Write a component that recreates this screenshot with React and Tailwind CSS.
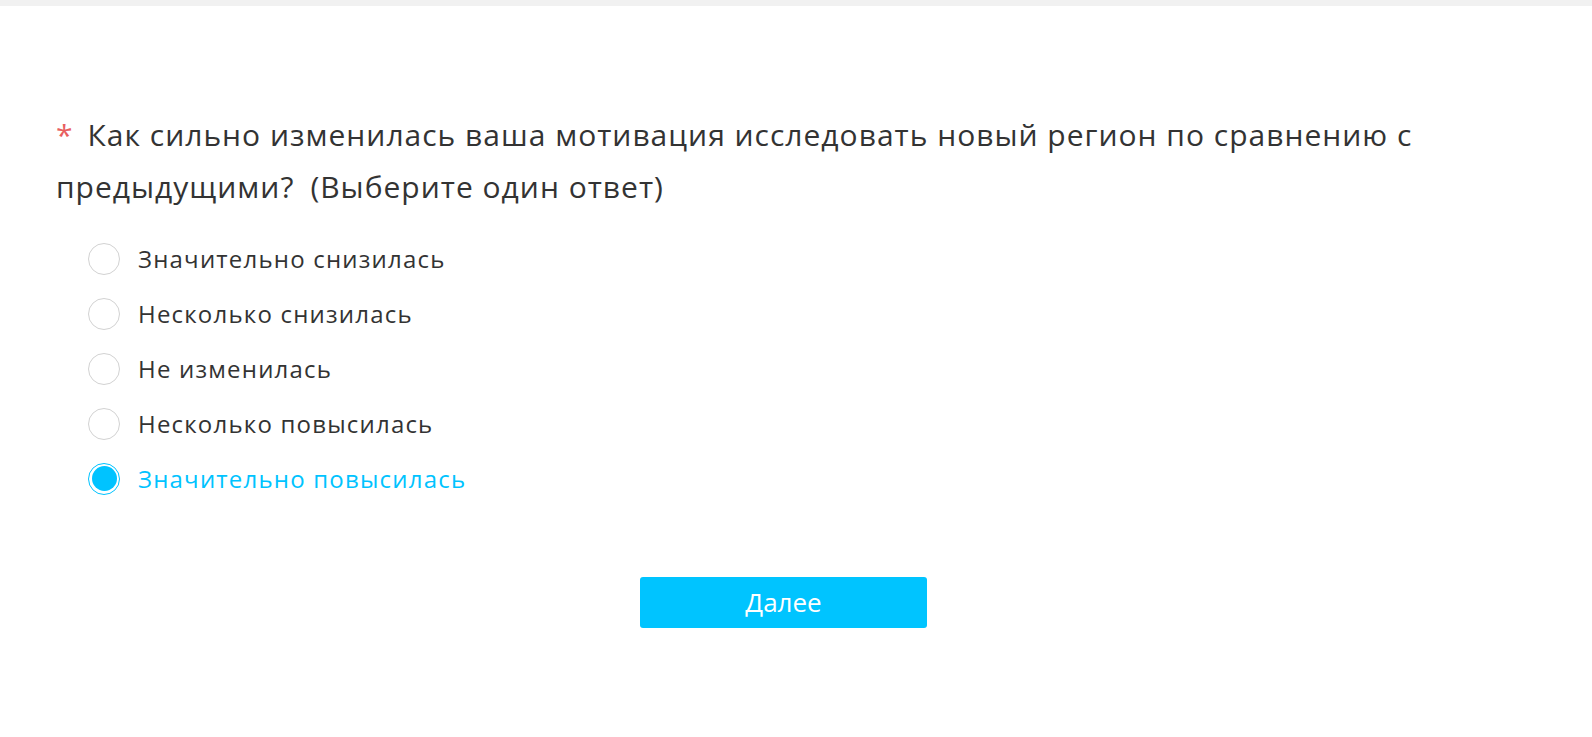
import { useState } from "react";

const options = [
    "Значительно снизилась",
    "Несколько снизилась",
    "Не изменилась",
    "Несколько повысилась",
    "Значительно повысилась",
];

const Survey = () => {
    const [selected, setSelected] = useState(4);

    return (
        <div className="min-h-screen bg-white font-['Open_Sans','Noto_Sans',sans-serif] text-[#333]">
            {/* top strip */}
            <div className="h-[6px] bg-[#f1f1f1]"></div>

            <div className="px-[56px] pt-[103px]">
                <h2 className="text-[30px] tracking-[1px] leading-[52px] font-normal pr-[60px] before:content-['*'] before:text-[#e8605f] before:mr-[14px]">
                    {"Как сильно изменилась ваша мотивация исследовать новый регион по сравнению с предыдущими?\u2002(Выберите один ответ)"}
                </h2>

                <div className="mt-[18px] pl-[32px] flex flex-col">
                    {options.map((opt, i) => {
                        const active = selected === i;
                        return (
                            <label
                                key={opt}
                                onClick={() => setSelected(i)}
                                className="h-[55px] flex items-center gap-[18px] cursor-pointer"
                            >
                                {active ? (
                                    <span className="w-[32px] h-[32px] rounded-full border border-[#00c3ff] flex items-center justify-center">
                                        <span className="w-[25px] h-[25px] rounded-full bg-[#00c3ff]"></span>
                                    </span>
                                ) : (
                                    <span className="w-[32px] h-[32px] rounded-full border border-[#d2d2d2]"></span>
                                )}
                                <span className={`text-[24px] tracking-[1.2px] ${active ? "text-[#00c3ff]" : "text-[#333]"}`}>
                                    {opt}
                                </span>
                            </label>
                        );
                    })}
                </div>

                <div className="mt-[71px] flex justify-center pr-[25px]">
                    <button className="w-[287px] h-[51px] rounded-[3px] bg-[#00c4ff] text-white text-[26px] font-medium">
                        Далее
                    </button>
                </div>
            </div>
        </div>
    );
};

export default function App() {
    return <Survey />;
}
